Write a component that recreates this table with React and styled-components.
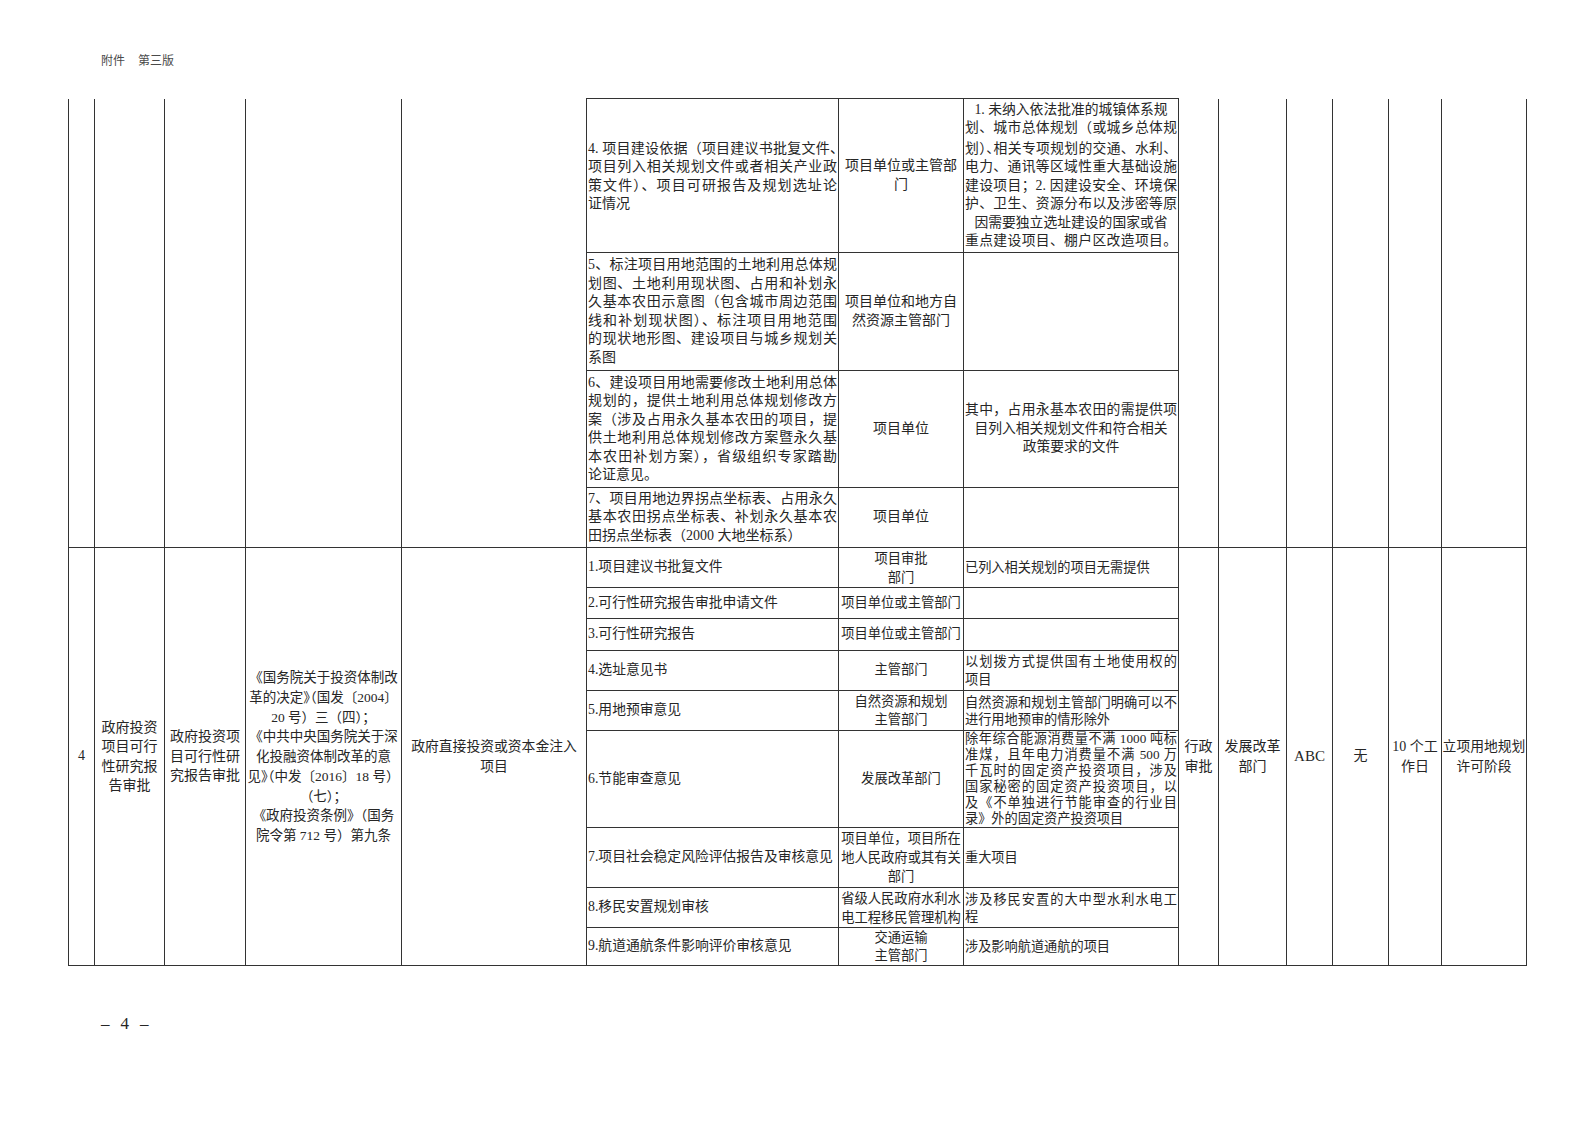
import React from 'react';
import styled, { createGlobalStyle } from 'styled-components';

const Global = createGlobalStyle`
  html, body { margin: 0; padding: 0; background: #fff; }
  body { font-family: "Liberation Serif", "Noto Sans CJK SC", serif; color: #262626; }
`;

const Page = styled.div`
  width: 1587px;
  height: 1122px;
  box-sizing: border-box;
  padding-top: 51px;
  background: #fff;
  overflow: hidden;
`;

const Header = styled.div`
  margin-left: 101px;
  display: flex;
  gap: 13px;
  height: 18px;
  font-family: "Noto Sans CJK SC", sans-serif;
  font-size: 12px;
  line-height: 18px;
  color: #4a4a4a;
`;

const Table = styled.table`
  margin: 29px 0 0 68px;
  width: 1458px;
  table-layout: fixed;
  border-collapse: collapse;
  color: #262626;
`;

const Col = styled.col`
  width: ${p => p.$w}px;
`;

const Row = styled.tr`
  height: ${p => p.$h}px;
`;

const Cell = styled.td`
  border: 1px solid #333;
  ${p => (p.$open ? 'border-top: none;' : '')}
  padding: 0 ${p => (p.$pad ?? 1)}px;
  text-align: ${p => p.$align || 'center'};
  vertical-align: middle;
  white-space: nowrap;
  overflow: visible;
  font-size: ${p => p.$fs || 14}px;
  line-height: ${p => p.$lh || 18.5}px;
`;

const Line = styled.span`
  display: block;
  white-space: nowrap;
  text-align-last: ${p => (p.$j ? 'justify' : 'auto')};
`;

const Half = styled.span`
  font-family: "Noto Sans CJK SC", sans-serif;
  font-feature-settings: "halt";
`;

const Footer = styled.div`
  margin: 48px 0 0 101px;
  display: flex;
  gap: 11px;
  height: 20px;
  font-size: 17px;
  line-height: 20px;
  color: #262626;
`;

const widths = [26, 70, 81, 156, 185, 252, 125, 215, 40, 68, 46, 56, 53, 85];

function parse(line) {
  const parts = line.split('^');
  return parts.map((p, i) => (i % 2 === 1 ? <Half key={i}>{p}</Half> : <React.Fragment key={i}>{p}</React.Fragment>));
}

// justify: 'none' | 'butLast' | array of indices to justify
function Lines({ lines, justify = 'none' }) {
  return lines.map((l, i) => {
    let j = false;
    if (justify === 'butLast') j = i < lines.length - 1;
    else if (Array.isArray(justify)) j = justify.includes(i);
    return (
      <Line key={i} $j={j}>
        {parse(l)}
      </Line>
    );
  });
}

const topRows = [
  {
    h: 154,
    mat: ['4. 项目建设依据（项目建议书批复文件^、^', '项目列入相关规划文件或者相关产业政', '策文件）、项目可研报告及规划选址论', '证情况'],
    dept: ['项目单位或主管部', '门'],
    rem: [
      '1. 未纳入依法批准的城镇体系规',
      '划、城市总体规划（或城乡总体规',
      '划^）、^相关专项规划的交通、水利、',
      '电力、通讯等区域性重大基础设施',
      '建设项目；2. 因建设安全、环境保',
      '护、卫生、资源分布以及涉密等原',
      '因需要独立选址建设的国家或省',
      '重点建设项目、棚户区改造项目。',
    ],
    remJ: [1, 2, 3, 4, 5, 7],
  },
  {
    h: 118,
    mat: [
      '5、标注项目用地范围的土地利用总体规',
      '划图、土地利用现状图、占用和补划永',
      '久基本农田示意图（包含城市周边范围',
      '线和补划现状图）、标注项目用地范围',
      '的现状地形图、建设项目与城乡规划关',
      '系图',
    ],
    dept: ['项目单位和地方自', '然资源主管部门'],
    rem: [],
  },
  {
    h: 117,
    mat: [
      '6、建设项目用地需要修改土地利用总体',
      '规划的，提供土地利用总体规划修改方',
      '案（涉及占用永久基本农田的项目，提',
      '供土地利用总体规划修改方案暨永久基',
      '本农田补划方案），省级组织专家踏勘',
      '论证意见。',
    ],
    dept: ['项目单位'],
    rem: ['其中，占用永基本农田的需提供项', '目列入相关规划文件和符合相关', '政策要求的文件'],
    remJ: [0],
  },
  {
    h: 60,
    mat: ['7、项目用地边界拐点坐标表、占用永久', '基本农田拐点坐标表、补划永久基本农', '田拐点坐标表（2000 大地坐标系）'],
    dept: ['项目单位'],
    rem: [],
  },
];

const subRows = [
  { h: 40, mat: '1.项目建议书批复文件', dept: ['项目审批', '部门'], dlh: 19, rem: ['已列入相关规划的项目无需提供'] },
  { h: 31, mat: '2.可行性研究报告审批申请文件', dept: ['项目单位或主管部门'], rem: [] },
  { h: 32, mat: '3.可行性研究报告', dept: ['项目单位或主管部门'], rem: [] },
  { h: 40, mat: '4.选址意见书', dept: ['主管部门'], rem: ['以划拨方式提供国有土地使用权的', '项目'], rlh: 18 },
  { h: 40, mat: '5.用地预审意见', dept: ['自然资源和规划', '主管部门'], dlh: 18, rem: ['自然资源和规划主管部门明确可以不', '进行用地预审的情形除外'] },
  {
    h: 97,
    mat: '6.节能审查意见',
    dept: ['发展改革部门'],
    rem: [
      '除年综合能源消费量不满 1000 吨标',
      '准煤，且年电力消费量不满 500 万',
      '千瓦时的固定资产投资项目，涉及',
      '国家秘密的固定资产投资项目，以',
      '及《不单独进行节能审查的行业目',
      '录》外的固定资产投资项目',
    ],
    rlh: 16,
  },
  { h: 60, mat: '7.项目社会稳定风险评估报告及审核意见', dept: ['项目单位，项目所在', '地人民政府或其有关', '部门'], dlh: 19, rem: ['重大项目'] },
  { h: 40, mat: '8.移民安置规划审核', dept: ['省级人民政府水利水', '电工程移民管理机构'], dlh: 19, rem: ['涉及移民安置的大中型水利水电工', '程'] },
  { h: 38, mat: '9.航道通航条件影响评价审核意见', dept: ['交通运输', '主管部门'], dlh: 18, rem: ['涉及影响航道通航的项目'] },
];

const legal = [
  '《国务院关于投资体制改',
  '革的决定^》（^国发〔2004〕',
  '20 号）三（四）；',
  '《中共中央国务院关于深',
  '化投融资体制改革的意',
  '见^》（^中发〔2016〕18 号）',
  '（七）；',
  '《政府投资条例》（国务',
  '院令第 712 号）第九条',
];

export default function App() {
  const span4 = topRows.length;
  const span9 = subRows.length;
  return (
    <Page>
      <Global />
      <Header>
        <span>附件</span>
        <span>第三版</span>
      </Header>
      <Table>
        <colgroup>
          {widths.map((w, i) => (
            <Col key={i} $w={w} />
          ))}
        </colgroup>
        <tbody>
          {topRows.map((r, i) => (
            <Row key={'t' + i} $h={r.h}>
              {i === 0 &&
                [0, 1, 2, 3, 4].map(k => <Cell key={'l' + k} rowSpan={span4} $open />)}
              <Cell $align="left">
                <Lines lines={r.mat} justify="butLast" />
              </Cell>
              <Cell>
                <Lines lines={r.dept} />
              </Cell>
              <Cell $fs={13.8}>
                <Lines lines={r.rem} justify={r.remJ || 'none'} />
              </Cell>
              {i === 0 &&
                [8, 9, 10, 11, 12, 13].map(k => <Cell key={'r' + k} rowSpan={span4} $open />)}
            </Row>
          ))}
          {subRows.map((r, i) => (
            <Row key={'s' + i} $h={r.h}>
              {i === 0 && (
                <>
                  <Cell rowSpan={span9}>4</Cell>
                  <Cell rowSpan={span9} $lh={19.5}>
                    <Lines lines={['政府投资', '项目可行', '性研究报', '告审批']} />
                  </Cell>
                  <Cell rowSpan={span9} $lh={19.5}>
                    <Lines lines={['政府投资项', '目可行性研', '究报告审批']} />
                  </Cell>
                  <Cell rowSpan={span9} $fs={13.5} $lh={19.5}>
                    <Lines lines={legal} />
                  </Cell>
                  <Cell rowSpan={span9} $fs={13.8} $lh={20}>
                    <Lines lines={['政府直接投资或资本金注入', '项目']} />
                  </Cell>
                </>
              )}
              <Cell $align="left" $fs={13.8}>
                {r.mat}
              </Cell>
              <Cell $fs={13.3} $lh={r.dlh || 18.5}>
                <Lines lines={r.dept} />
              </Cell>
              <Cell $align="left" $fs={13.2} $lh={r.rlh || 17}>
                <Lines lines={r.rem} justify="butLast" />
              </Cell>
              {i === 0 && (
                <>
                  <Cell rowSpan={span9} $pad={0} $lh={20}>
                    <Lines lines={['行政', '审批']} />
                  </Cell>
                  <Cell rowSpan={span9} $pad={0} $lh={20}>
                    <Lines lines={['发展改革', '部门']} />
                  </Cell>
                  <Cell rowSpan={span9} $pad={0} $fs={15}>
                    ABC
                  </Cell>
                  <Cell rowSpan={span9} $pad={0}>
                    无
                  </Cell>
                  <Cell rowSpan={span9} $pad={0} $lh={20}>
                    <Lines lines={['10 个工', '作日']} />
                  </Cell>
                  <Cell rowSpan={span9} $pad={0} $fs={13.8} $lh={20}>
                    <Lines lines={['立项用地规划', '许可阶段']} />
                  </Cell>
                </>
              )}
            </Row>
          ))}
        </tbody>
      </Table>
      <Footer>
        <span>–</span>
        <span>4</span>
        <span>–</span>
      </Footer>
    </Page>
  );
}
